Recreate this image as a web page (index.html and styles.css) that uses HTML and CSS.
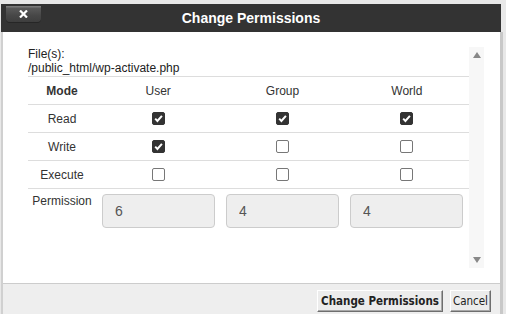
FILE: index.html
```html
<!DOCTYPE html>
<html>
<head>
<meta charset="utf-8">
<link rel="stylesheet" href="styles.css">
</head>
<body>
<div class="dialog">
  <div class="titlebar">
    <button class="close" aria-label="Close"><svg width="9" height="8" viewBox="0 0 9 8"><path d="M1 0.5 L8 7.5 M8 0.5 L1 7.5" stroke="#fff" stroke-width="2.2" fill="none"/></svg></button>
    <h1 class="title">Change Permissions</h1>
    <span></span>
  </div>
  <div class="frame">
    <div class="body">
      <div class="main">
        <div class="files">File(s):<br>/public_html/wp-activate.php</div>
        <table class="perm">
          <colgroup><col class="c-mode"><col><col><col></colgroup>
          <tr class="head"><th>Mode</th><td>User</td><td>Group</td><td>World</td></tr>
          <tr><td>Read</td><td><span class="cb on"><svg width="13" height="13" viewBox="0 0 13 13"><path d="M3.2 6.6 L5.4 8.9 L9.9 3.8" stroke="#fff" stroke-width="2" fill="none"/></svg></span></td><td><span class="cb on"><svg width="13" height="13" viewBox="0 0 13 13"><path d="M3.2 6.6 L5.4 8.9 L9.9 3.8" stroke="#fff" stroke-width="2" fill="none"/></svg></span></td><td><span class="cb on"><svg width="13" height="13" viewBox="0 0 13 13"><path d="M3.2 6.6 L5.4 8.9 L9.9 3.8" stroke="#fff" stroke-width="2" fill="none"/></svg></span></td></tr>
          <tr><td>Write</td><td><span class="cb on"><svg width="13" height="13" viewBox="0 0 13 13"><path d="M3.2 6.6 L5.4 8.9 L9.9 3.8" stroke="#fff" stroke-width="2" fill="none"/></svg></span></td><td><span class="cb"></span></td><td><span class="cb"></span></td></tr>
          <tr><td>Execute</td><td><span class="cb"></span></td><td><span class="cb"></span></td><td><span class="cb"></span></td></tr>
        </table>
        <div class="perm-row">
          <label class="perm-label">Permission</label>
          <div class="inputs">
            <input class="num" type="text" value="6" readonly>
            <input class="num" type="text" value="4" readonly>
            <input class="num" type="text" value="4" readonly>
          </div>
        </div>
      </div>
      <div class="scrollbar">
        <span class="arrow up"></span>
        <span class="arrow down"></span>
      </div>
    </div>
    <div class="footer">
      <button class="btn primary">Change Permissions</button>
      <button class="btn cancel">Cancel</button>
    </div>
  </div>
</div>
</body>
</html>
```
FILE: styles.css
```css
html, body {
  margin: 0;
  height: 100%;
}
body {
  background: #e8e8e8;
  font-family: "Liberation Sans", Arial, sans-serif;
  overflow: hidden;
}
.dialog {
  margin: 4px 0 0 1px;
  width: 502px;
}
.titlebar {
  width: 500px;
  height: 28px;
  background: #333;
  display: grid;
  grid-template-columns: 1fr auto 1fr;
  align-items: center;
}
.close {
  justify-self: start;
  align-self: start;
  margin: 2px 0 0 5px;
  width: 35px;
  height: 16px;
  padding: 0;
  border: 0;
  border-radius: 0 0 4px 4px;
  background: linear-gradient(#7a7a7a 0, #7a7a7a 1px, #5a5a5a 2px, #474747 60%, #3e3e3e 100%);
  box-shadow: 0 1px 0 #262626;
  display: flex;
  align-items: center;
  justify-content: center;
}
.close svg { display: block; }
.title {
  margin: 0;
  font-size: 14px;
  font-weight: bold;
  color: #fff;
  line-height: 28px;
}
.frame {
  border-left: 2px solid #d0d0d0;
  border-right: 3px solid #c8c8c8;
}
.body {
  background: #fff;
  height: 251px;
  box-sizing: border-box;
  padding: 15px 16px 0 25px;
  display: flex;
  align-items: flex-start;
}
.main {
  width: 441px;
  color: #333;
  font-size: 12px;
}
.files {
  line-height: 14px;
  color: #222;
  margin-bottom: 1px;
}
.perm {
  width: 441px;
  table-layout: fixed;
  border-collapse: separate;
  border-spacing: 0;
  border-top: 1px solid #ddd;
}
.c-mode { width: 68px; }
.perm th, .perm td {
  height: 27px;
  padding: 0;
  border-bottom: 1px solid #ddd;
  text-align: center;
  vertical-align: middle;
  font-size: 12px;
  font-weight: normal;
  color: #333;
}
.perm th { font-weight: bold; }
.cb {
  display: inline-block;
  width: 13px;
  height: 13px;
  box-sizing: border-box;
  border: 1px solid #777;
  border-radius: 2px;
  background: #fff;
  vertical-align: middle;
  position: relative;
  top: -1px;
}
.cb.on {
  border-color: #333;
  background: #333;
}
.cb svg {
  display: block;
  margin: -1px;
}
.perm-row {
  display: flex;
  margin-top: 5px;
}
.perm-label {
  width: 68px;
  text-align: center;
  line-height: 14px;
  color: #333;
}
.inputs {
  display: flex;
  gap: 11px;
  margin-left: 6px;
}
.num {
  width: 113px;
  height: 34px;
  box-sizing: border-box;
  border: 1px solid #ccc;
  border-radius: 4px;
  background: #eee;
  padding: 0 0 0 12px;
  font-family: "Liberation Sans", Arial, sans-serif;
  font-size: 14px;
  color: #555;
  margin: 0;
}
.scrollbar {
  width: 15px;
  height: 221px;
  background: #f7f7f7;
  display: flex;
  flex-direction: column;
  justify-content: space-between;
  align-items: center;
  padding: 5px 0;
  box-sizing: border-box;
}
.arrow {
  width: 0;
  height: 0;
  border-left: 4.5px solid transparent;
  border-right: 4.5px solid transparent;
}
.arrow.up { border-bottom: 6px solid #888; }
.arrow.down { border-top: 6px solid #888; }
.footer {
  background: #eee;
  border-top: 1px solid #ccc;
  height: 40px;
  display: flex;
  justify-content: flex-end;
  align-items: flex-start;
  gap: 7px;
  padding: 6px 9px 0 0;
  box-sizing: border-box;
}
.btn {
  height: 22px;
  padding: 0 3px;
  background: #ececec;
  border: 1px solid;
  border-color: #fff #6e6e6e #6e6e6e #fff;
  box-shadow: inset -1px -1px 0 #a8a8a8;
  font-family: "DejaVu Sans Condensed", "DejaVu Sans", sans-serif;
  font-size: 11.5px;
  color: #222;
  border-radius: 0;
}
.btn.primary { font-weight: bold; }
.btn.cancel { padding: 0 2px; }
```
